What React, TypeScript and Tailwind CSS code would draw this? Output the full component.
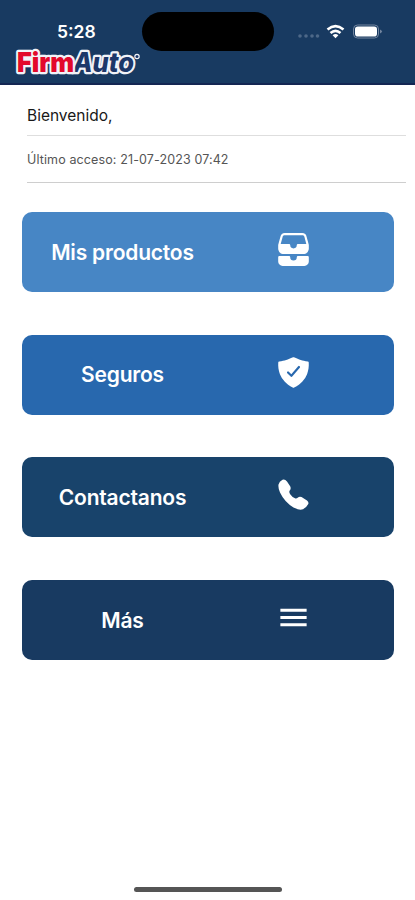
import type { ComponentType } from 'react';
import { IoMdMenu } from 'react-icons/io';
import { IoFileTrayStacked, IoShieldCheckmark } from 'react-icons/io5';

interface IconProps {
  size?: number;
  className?: string;
}

interface MenuButtonProps {
  label: string;
  icon: ComponentType<IconProps>;
  className: string;
}

function PhoneIcon({ size, className }: IconProps) {
  return (
    <svg className={className} width={size} height={size} viewBox="5.5 7 35 35" fill="currentColor">
      <path d="M12 9.8Q14.5 9 16.5 11.5L19.5 16Q21 18.5 19.2 20.5Q18.2 22 19.7 24.2Q21.5 27 24.5 28.2Q26 28.8 27.5 27.4Q29 26.2 31 27L36.5 30.5Q38.7 32.2 37.6 34.3Q35.5 38.2 32.5 39.3Q28.5 40.5 23 37.5Q14 32 9.5 22.5Q7.5 18 8 14.5Q8.8 11.3 12 9.8Z" />
    </svg>
  );
}

function MenuButton({ label, icon: Icon, className }: MenuButtonProps) {
  return (
    <button
      className={`grid h-20 w-full grid-cols-[201px_140px] items-center justify-items-center rounded-[10px] text-[21px] font-semibold text-white ${className}`}
    >
      <span className="pt-px whitespace-nowrap tracking-[-0.2px]">{label}</span>
      <Icon className="mb-[5px]" size={35} />
    </button>
  );
}

function Logo() {
  return (
    <svg
      className="block"
      width="132"
      height="34"
      viewBox="0 0 132 34"
      fontFamily="Inter, 'Liberation Sans', sans-serif"
      fontSize="27"
      stroke="#f1f3f8"
      strokeWidth="4.5"
      strokeLinejoin="round"
      paintOrder="stroke"
    >
      <text x="60" y="28.5" fill="#1c3769" fontStyle="italic" fontWeight="800" textLength="61" lengthAdjust="spacingAndGlyphs">
        Auto
      </text>
      <text x="4" y="28.5" fill="#e3092b" fontWeight="900" textLength="57" lengthAdjust="spacingAndGlyphs">
        Firm
      </text>
      <circle cx="124" cy="13.5" r="1.5" fill="#1c3769" strokeWidth="2.5" />
    </svg>
  );
}

function StatusIcons() {
  return (
    <svg width="86" height="18" viewBox="0 0 86 18" fill="none">
      {/* señal */}
      <g fill="#4d6888">
        <circle cx="3" cy="13" r="1.8" />
        <circle cx="9" cy="13" r="1.8" />
        <circle cx="15" cy="13" r="1.8" />
        <circle cx="20.5" cy="13" r="1.8" />
      </g>
      {/* wifi */}
      <g stroke="#fff" strokeWidth="2.6">
        <path d="M30.5 6.5Q38.5-.2 46.5 6.5" />
        <path d="M33.5 10Q38.5 5.6 43.5 10" />
      </g>
      <path d="M38.5 15.2L35.6 12.2Q38.5 9.7 41.4 12.2Z" fill="#fff" />
      {/* batería */}
      <rect x="56.5" y="2" width="25" height="13" rx="4" stroke="#72859f" />
      <rect x="58" y="3.5" width="22" height="10" rx="2.8" fill="#fff" />
      <path d="M83 6.5Q87 8.5 83 10.5Z" fill="#72859f" />
    </svg>
  );
}

export default function App() {
  return (
    <div className="flex h-[900px] w-[415px] flex-col overflow-hidden bg-white font-['Inter','Liberation_Sans',sans-serif]">
      <header className="h-[85px] shrink-0 border-b-2 border-[#142653] bg-[#183a61]">
        <div className="flex pt-[12px]">
          <div className="w-[142px] pt-[8px] pl-[57px] text-[17.5px] leading-6 font-semibold text-white">5:28</div>
          <div className="h-[39px] w-[132px] rounded-full bg-black" />
          <div className="pt-[11px] pl-[23px]">
            <StatusIcons />
          </div>
        </div>
        <div className="-mt-[8px] pl-[13px]">
          <Logo />
        </div>
      </header>

      <section className="ml-[27px] w-[379px]">
        <p className="h-[51px] border-b border-[#dedede] pt-[20px] text-[15.5px] leading-[22px] text-[#181818]">
          Bienvenido,
        </p>
        <p className="h-[47px] border-b border-[#cecece] pt-[15px] text-[12.5px] leading-[18px] tracking-[0.12px] text-[#555]">
          Último acceso: 21-07-2023 07:42
        </p>
      </section>

      <main className="mt-[29px] ml-[22px] flex w-[372px] flex-col gap-[42.7px]">
        <MenuButton label="Mis productos" icon={IoFileTrayStacked} className="bg-[#4786c5]" />
        <MenuButton label="Seguros" icon={IoShieldCheckmark} className="bg-[#2868ae]" />
        <MenuButton label="Contactanos" icon={PhoneIcon} className="bg-[#18436b]" />
        <MenuButton label="Más" icon={IoMdMenu} className="bg-[#183a61]" />
      </main>

      <div className="mx-auto mt-auto mb-[8px] h-[5px] w-[148px] rounded-full bg-[#555]" />
    </div>
  );
}
